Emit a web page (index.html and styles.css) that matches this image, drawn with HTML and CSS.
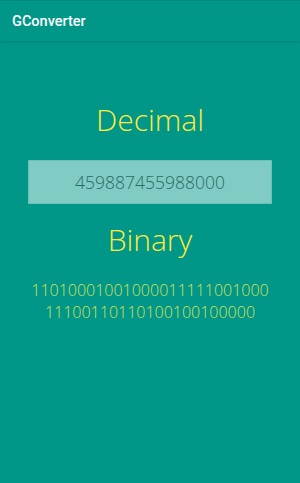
FILE: index.html
```html
<!DOCTYPE html>
<html>
<head>
<meta charset="utf-8">
<link rel="stylesheet" href="styles.css">
</head>
<body>
<div class="app">
  <header class="appbar"><span class="title">GConverter</span></header>
  <main class="content">
    <h1 class="label">Decimal</h1>
    <div class="input">459887455988000</div>
    <h1 class="label binary-label">Binary</h1>
    <p class="result">11010001001000011111001000<br>11100110110100100100000</p>
  </main>
</div>
</body>
</html>
```
FILE: styles.css
```css
html, body { margin: 0; padding: 0; }
body { width: 300px; height: 483px; background: #009688; overflow: hidden; }
.app { display: flex; flex-direction: column; height: 483px; }
.appbar {
  height: 41px;
  border-top: 1px solid #00897b;
  box-sizing: border-box;
  display: flex;
  align-items: center;
  padding: 0 12px;
  background: #009688;
  box-shadow: 0 1px 2px rgba(0,0,0,0.12);
}
.title { font-family: Roboto, sans-serif; font-weight: 500; font-size: 14.5px; color: #fff; }
.content { display: flex; flex-direction: column; align-items: center; }
.label {
  margin: 59px 0 0;
  font-family: "Open Sans", sans-serif;
  font-weight: 300;
  font-size: 30px;
  line-height: 40px;
  color: #ffeb3b;
}
.input {
  margin-top: 20px;
  width: 244px;
  height: 44px;
  box-sizing: border-box;
  background: #80cbc4;
  border: 1px solid #6cc0b6;
  display: flex;
  align-items: center;
  justify-content: center;
  font-family: "Open Sans", sans-serif;
  font-weight: 300;
  font-size: 17.5px;
  color: #2a6b64;
}
.binary-label { margin-top: 16px; }
.result {
  margin: 19px 0 0;
  text-align: center;
  font-family: "Open Sans", sans-serif;
  font-weight: 300;
  font-size: 16px;
  line-height: 22px;
  color: #d4e157;
}
```
